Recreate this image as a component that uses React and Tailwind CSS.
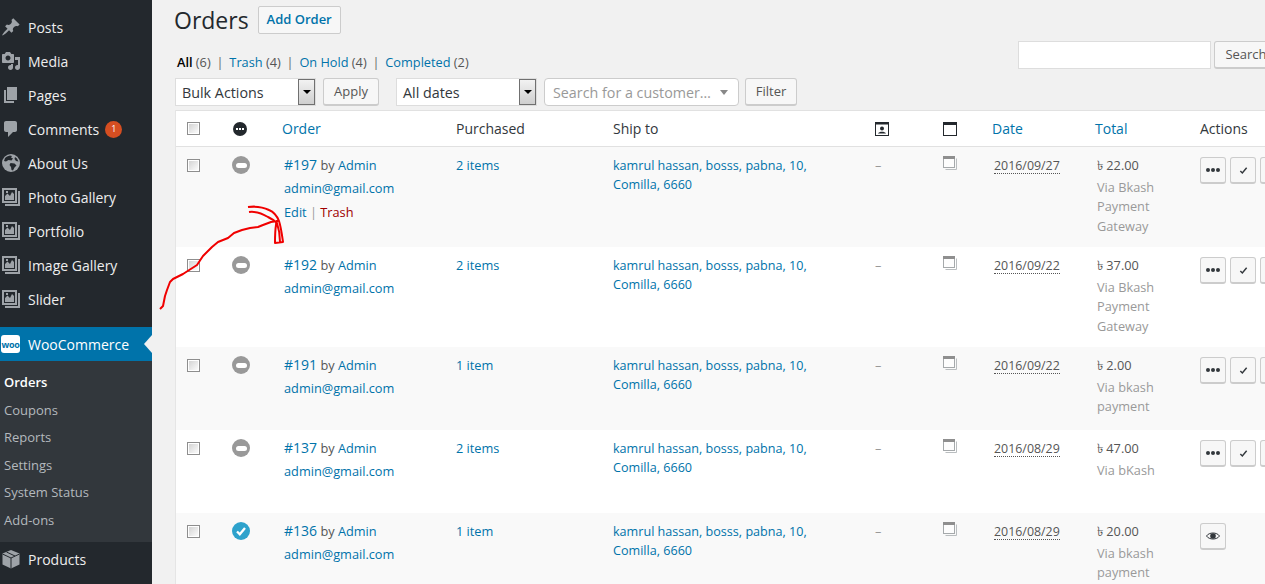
import React from "react";

const GRID = "grid grid-cols-[57px_51px_172px_157px_262px_68px_51px_103px_103px_65px]";

function DashIcon({ d }) {
  return (
    <svg viewBox="0 0 20 20" className="w-5 h-5 shrink-0 fill-[#9ea3a8]">
      <path d={d} />
    </svg>
  );
}
const Pin = () => <DashIcon d="M10.44 3.02l1.82-1.82 6.36 6.35-1.83 1.82c-1.05-.68-2.48-.57-3.41.36l-.75.75c-.92.93-1.04 2.35-.35 3.41l-1.83 1.82-2.41-2.41-2.8 2.79c-.42.42-3.38 2.71-3.8 2.29s1.86-3.39 2.28-3.81l2.79-2.79L4.1 9.36l1.83-1.82c1.05.69 2.48.57 3.4-.36l.75-.75c.93-.92 1.05-2.35.36-3.41z" />;
const Media = () => <DashIcon d="M13 11V4c0-.55-.45-1-1-1h-1.67L9 1H5L3.67 3H2c-.55 0-1 .45-1 1v7c0 .55.45 1 1 1h10c.55 0 1-.45 1-1zM7 4.5c1.38 0 2.5 1.12 2.5 2.5S8.38 9.5 7 9.5 4.5 8.38 4.5 7 5.62 4.5 7 4.5zM14 6h5v10.5c0 1.38-1.12 2.5-2.5 2.5S14 17.88 14 16.5s1.12-2.5 2.5-2.5c.17 0 .34.02.5.05V9h-3V6zm-4 8.05V13h2v3.5c0 1.38-1.12 2.5-2.5 2.5S7 17.88 7 16.5 8.12 14 9.5 14c.17 0 .34.02.5.05z" />;
const Page = () => <DashIcon d="M6 15V2h10v13H6zm-1 1h8v2H3V5h2v11z" />;
const Comment = () => <DashIcon d="M5 2h9c1.1 0 2 .9 2 2v7c0 1.1-.9 2-2 2h-2l-5 5v-5H5c-1.1 0-2-.9-2-2V4c0-1.1.9-2 2-2z" />;
const Globe = () => (
  <svg viewBox="0 0 20 20" className="w-5 h-5 shrink-0">
    <circle cx="10" cy="10" r="9" fill="#9ea3a8" />
    <path fill="#23282d" d="M6 3.500l3-1 2 .5-1 1.500 2 1-1.500 2-3-.5L5 8.500 3 8l1-3zM9.500 10l4 .5 2 2-2 2-1.500 3-1.500-.5-.5-3-1.500-2zM14 4l2 1.500 1.500 3-2.500-.5-1.500-2z" />
  </svg>
);
const Gallery = () => (
  <svg viewBox="0 0 20 20" className="w-5 h-5 shrink-0">
    <path fill="#9ea3a8" d="M1 1h15v15H1zM17 4h2v15H4v-2h13z" />
    <rect x="3" y="3" width="11" height="11" fill="#23282d" />
    <path fill="#9ea3a8" d="M4 13V9l2.500-2.500L9 9l2-4 2 2v6zM5 4h2v2H5z" />
  </svg>
);
const Box = () => (
  <svg viewBox="0 0 20 20" className="w-5 h-5 shrink-0">
    <path fill="#9ea3a8" d="M10 1l8.500 3.500v11L10 19.500 1.500 15.500v-11z" />
    <path fill="none" stroke="#23282d" strokeWidth="1" d="M1.500 5L10 9l8.500-4M10 9v10.500M5.500 3l8.500 4" />
  </svg>
);

function MenuItem({ icon, label, badge }) {
  return (
    <div className="h-[34px] pl-px flex items-center text-[14px] text-[#eeeeee]">
      {icon}
      <span className="ml-[7px]">{label}</span>
      {badge && (
        <span className="ml-[6px] w-[17px] h-[17px] rounded-full bg-[#d54e21] text-white text-[9px] flex items-center justify-center">
          {badge}
        </span>
      )}
    </div>
  );
}

function Sidebar() {
  return (
    <aside className="w-[152px] shrink-0 h-[584px] bg-[#23282d] pt-[10px] overflow-hidden">
      <MenuItem icon={<Pin />} label="Posts" />
      <MenuItem icon={<Media />} label="Media" />
      <MenuItem icon={<Page />} label="Pages" />
      <MenuItem icon={<Comment />} label="Comments" badge="1" />
      <MenuItem icon={<Globe />} label="About Us" />
      <MenuItem icon={<Gallery />} label="Photo Gallery" />
      <MenuItem icon={<Gallery />} label="Portfolio" />
      <MenuItem icon={<Gallery />} label="Image Gallery" />
      <MenuItem icon={<Gallery />} label="Slider" />
      <div className="relative mt-[11px] h-[34px] bg-[#0073aa] flex items-center pl-px text-[14px] text-white">
        <span className="w-[19px] h-[18px] rounded-[3px] bg-white text-[#0073aa] text-[9px] font-bold tracking-tight flex items-center justify-center leading-none">woo</span>
        <span className="ml-[8px]">WooCommerce</span>
        <span className="absolute right-0 top-[8px] w-0 h-0 border-y-[9px] border-y-transparent border-r-[8px] border-r-[#f1f1f1]" />
      </div>
      <div className="h-[181px] bg-[#32373c] pt-[8px] pl-[4px] text-[13px] text-[#b4b9be] flex flex-col">
        <span className="h-[27.6px] leading-[27.6px] text-white font-semibold">Orders</span>
        <span className="h-[27.6px] leading-[27.6px]">Coupons</span>
        <span className="h-[27.6px] leading-[27.6px]">Reports</span>
        <span className="h-[27.6px] leading-[27.6px]">Settings</span>
        <span className="h-[27.6px] leading-[27.6px]">System Status</span>
        <span className="h-[27.6px] leading-[27.6px]">Add-ons</span>
      </div>
      <MenuItem icon={<Box />} label="Products" />
    </aside>
  );
}

function Check() {
  return (
    <span className="block w-[13px] h-[13px] border border-[#8e8e8e] p-px bg-white">
      <span className="block w-full h-full bg-linear-to-br from-[#d4d4d4] to-[#fbfbfb]" />
    </span>
  );
}

function NativeSelect({ label, width }) {
  return (
    <div className={`h-[28px] ${width} bg-white border border-[#dddddd] flex items-center pl-[6px] pt-px text-[14.3px] text-[#32373c] relative`}>
      {label}
      <span className="absolute right-0 top-0 w-[17px] h-[26px] border border-[#707070] bg-linear-to-b from-[#f2f2f2] to-[#cfcfcf] flex items-center justify-center">
        <span className="w-0 h-0 border-x-[4px] border-x-transparent border-t-[4px] border-t-black" />
      </span>
    </div>
  );
}

function Btn({ children, className }) {
  return (
    <div className={`h-[28px] bg-[#f7f7f7] border border-[#cccccc] border-b-2 rounded-[3px] flex items-center justify-center pt-px text-[13px] text-[#555555] ${className}`}>
      {children}
    </div>
  );
}

function Sep() {
  return <span className="w-[18.7px] text-center text-[#666666]">|</span>;
}

function Toolbar() {
  return (
    <>
      <div className="flex items-center h-[34px] pt-[6px] -ml-px">
        <h1 className="text-[23px] leading-[28px] text-[#23282d]">Orders</h1>
        <span className="ml-[9px] h-[28px] w-[83px] border border-[#cccccc] rounded-[2px] bg-[#f7f7f7] text-[13px] font-semibold text-[#0073aa] flex items-center justify-center">
          Add Order
        </span>
      </div>
      <div className="flex mt-[7px] h-[28px]">
        <div className="w-[843px] shrink-0 pt-[11px] pl-[2px] text-[12.75px] leading-[20px] text-[#555555] flex whitespace-pre">
          <span className="text-black font-semibold">All</span>
          <span> (6)</span>
          <Sep />
          <span className="text-[#0073aa]">Trash</span>
          <span> (4)</span>
          <Sep />
          <span className="text-[#0073aa]">On Hold</span>
          <span> (4)</span>
          <Sep />
          <span className="text-[#0073aa]">Completed</span>
          <span> (2)</span>
        </div>
        <div className="w-[193px] h-[28px] shrink-0 bg-white border border-[#dddddd]" />
        <Btn className="ml-[3px] w-[64px] shrink-0">Search</Btn>
      </div>
      <div className="flex mt-[9px] h-[28px]">
        <NativeSelect label="Bulk Actions" width="w-[141px]" />
        <Btn className="ml-[7px] w-[56px]">Apply</Btn>
        <div className="ml-[17px]">
          <NativeSelect label="All dates" width="w-[141px]" />
        </div>
        <div className="ml-[7px] w-[195px] h-[28px] bg-white border border-[#cccccc] rounded-[4px] flex items-center pl-[8px] pt-px text-[14.3px] text-[#999999] relative">
          Search for a customer…
          <span className="absolute right-[10px] top-[11px] w-0 h-0 border-x-[4px] border-x-transparent border-t-[5px] border-t-[#888888]" />
        </div>
        <Btn className="ml-[6px] w-[52px]">Filter</Btn>
      </div>
    </>
  );
}

function Minus() {
  return (
    <span className="mt-[9px] w-[18px] h-[18px] -ml-px rounded-full bg-[#999999] flex items-center justify-center">
      <span className="w-[11px] h-[5px] rounded-full bg-white" />
    </span>
  );
}
function Done() {
  return (
    <span className="mt-[9px] w-[18px] h-[18px] -ml-px rounded-full bg-[#2ea2cc] flex items-center justify-center">
      <svg viewBox="0 0 12 12" className="w-3 h-3">
        <path d="M2 6.500l2.800 2.800L10 3" fill="none" stroke="white" strokeWidth="2.300" />
      </svg>
    </span>
  );
}

function WinIcon() {
  return (
    <svg viewBox="0 0 14 14" className="w-[14px] h-[14px] mt-[9px]">
      <path fill="none" stroke="#b9bdbf" d="M2.500 13.500h11v-11" />
      <rect x="0.500" y="0.500" width="11" height="11" fill="#fdfdfd" stroke="#a5a9ab" />
      <rect x="0" y="0" width="12" height="3" fill="#8f8f8f" />
    </svg>
  );
}

function ActBtn({ children }) {
  return (
    <span className="w-[26px] h-[27px] shrink-0 mt-[10px] bg-[#f7f7f7] border border-[#cccccc] border-b-2 rounded-[3px] flex items-center justify-center">
      {children}
    </span>
  );
}
const Dots = () => (
  <svg viewBox="0 0 14 4" className="w-[14px] h-[4px] fill-[#32373c]">
    <circle cx="2" cy="2" r="2" />
    <circle cx="7" cy="2" r="2" />
    <circle cx="12" cy="2" r="2" />
  </svg>
);
const Tick = () => (
  <svg viewBox="0 0 10 10" className="w-[9px] h-[9px]">
    <path d="M1.500 5.500l2.200 2.200L8.500 2" fill="none" stroke="#32373c" strokeWidth="1.600" />
  </svg>
);
const Eye = () => (
  <svg viewBox="0 0 14 10" className="w-[14px] h-[10px]">
    <path d="M0.500 5C3 1 11 1 13.500 5 11 9 3 9 0.500 5z" fill="none" stroke="#32373c" />
    <circle cx="7" cy="5" r="2.800" fill="#32373c" />
  </svg>
);

const rows = [
  { id: "#197", items: "2 items", date: "2016/09/27", total: "22.00", via: ["Via Bkash", "Payment", "Gateway"], h: "h-[100px]", bg: "bg-[#f9f9f9]", hover: true },
  { id: "#192", items: "2 items", date: "2016/09/22", total: "37.00", via: ["Via Bkash", "Payment", "Gateway"], h: "h-[100px]", bg: "bg-white" },
  { id: "#191", items: "1 item", date: "2016/09/22", total: "2.00", via: ["Via bkash", "payment"], h: "h-[83px]", bg: "bg-[#f9f9f9]" },
  { id: "#137", items: "2 items", date: "2016/08/29", total: "47.00", via: ["Via bKash"], h: "h-[83px]", bg: "bg-white" },
  { id: "#136", items: "1 item", date: "2016/08/29", total: "20.00", via: ["Via bkash", "payment"], h: "h-[83px]", bg: "bg-[#f9f9f9]", done: true },
];

function Row({ r }) {
  return (
    <div className={`${GRID} ${r.h} ${r.bg} text-[12.75px] leading-[19.5px] overflow-hidden`}>
      <div className="pl-[11px] pt-[12px]"><Check /></div>
      <div className="flex items-start">{r.done ? <Done /> : <Minus />}</div>
      <div className="pt-[8px] text-[#0073aa]">
        <div><span className="text-[14px] font-medium">{r.id}</span> <span className="text-[#555555]">by</span> Admin</div>
        <div className="mt-[3px]">admin@gmail.com</div>
        {r.hover && (
          <div className="mt-[5px]">Edit <span className="text-[#999999]">|</span> <span className="text-[#a00000]">Trash</span></div>
        )}
      </div>
      <div className="pt-[9px] text-[#0073aa]">{r.items}</div>
      <div className="pt-[9px] pr-[50px] text-[12.6px] leading-[19px] text-[#0073aa]">kamrul hassan, bosss, pabna, 10, Comilla, 6660</div>
      <div className="pt-[9px] text-[#999999]">–</div>
      <div><WinIcon /></div>
      <div className="pt-[9px] text-[12.4px] text-[#555555]">
        <span className="border-b border-dotted border-[#555555] inline-block leading-[15px]">{r.date}</span>
      </div>
      <div className="pt-[9px] text-[#555555]">
        <div>৳ {r.total}</div>
        <div className="mt-[2px] text-[#999999] leading-[19.8px]">
          {r.via.map((v) => <div key={v}>{v}</div>)}
        </div>
      </div>
      <div className="flex gap-[4px]">
        {r.done ? (
          <ActBtn><Eye /></ActBtn>
        ) : (
          <>
            <ActBtn><Dots /></ActBtn>
            <ActBtn><Tick /></ActBtn>
            <ActBtn><span /></ActBtn>
          </>
        )}
      </div>
    </div>
  );
}

function Table() {
  return (
    <div className="mt-[4px] border-l border-[#e5e5e5] w-[1090px] overflow-hidden">
      <div className={`${GRID} h-[37px] bg-white border-y border-[#e1e1e1] items-center text-[14px] text-[#32373c]`}>
        <div className="pl-[11px]"><Check /></div>
        <div>
          <svg viewBox="0 0 14 14" className="w-[14px] h-[14px]">
            <circle cx="7" cy="7" r="7" fill="#23282d" />
            <path d="M3 6h2v2H3zM6 6h2v2H6zM9 6h2v2H9z" fill="white" />
          </svg>
        </div>
        <div className="-ml-[2px] text-[#0073aa]">Order</div>
        <div>Purchased</div>
        <div>Ship to</div>
        <div>
          <svg viewBox="0 0 14 14" className="w-[14px] h-[14px]">
            <rect x="0.500" y="0.500" width="13" height="13" fill="white" stroke="#23282d" />
            <rect width="14" height="2.500" fill="#23282d" />
            <circle cx="7" cy="6.500" r="2" fill="#23282d" />
            <path d="M3 11.500c1-2.500 7-2.500 8 0z" fill="#23282d" />
          </svg>
        </div>
        <div>
          <svg viewBox="0 0 14 14" className="w-[14px] h-[14px]">
            <rect x="0.500" y="0.500" width="13" height="13" fill="white" stroke="#23282d" />
            <rect width="14" height="3" fill="#23282d" />
          </svg>
        </div>
        <div className="-ml-[2px] text-[#0073aa]">Date</div>
        <div className="-ml-[2px] text-[#0073aa]">Total</div>
        <div>Actions</div>
      </div>
      {rows.map((r) => <Row key={r.id} r={r} />)}
    </div>
  );
}

function Arrow() {
  return (
    <svg className="absolute left-0 top-0 w-[1265px] h-[584px] pointer-events-none" viewBox="0 0 1265 584">
      <path
        fill="none"
        stroke="#f00000"
        strokeWidth="2"
        strokeLinejoin="round"
        d="M160 309l3-3 2-10 2-6 3-8 3-3 10-5 14-9 6-9 9-9 6-5 10-4 6-5 8-3 8-2 8-1 5-2 8-3 7-1M248 207c8-1 15 0 21 3 5 2 8 6 10 11 2 6 3 14 4 21l-8 1c0-6 0-12 1-18 0-3 1-5 3-6M249 212c7-1 14 2 19 5 4 2 7 4 9 6 2 6 3 14 3 19"
      />
    </svg>
  );
}

export default function App() {
  return (
    <div className="relative w-[1265px] h-[584px] overflow-hidden flex bg-[#f1f1f1] font-['Open_Sans',sans-serif]">
      <Sidebar />
      <main className="pl-[23px] w-[1113px] shrink-0">
        <Toolbar />
        <Table />
      </main>
      <Arrow />
    </div>
  );
}
